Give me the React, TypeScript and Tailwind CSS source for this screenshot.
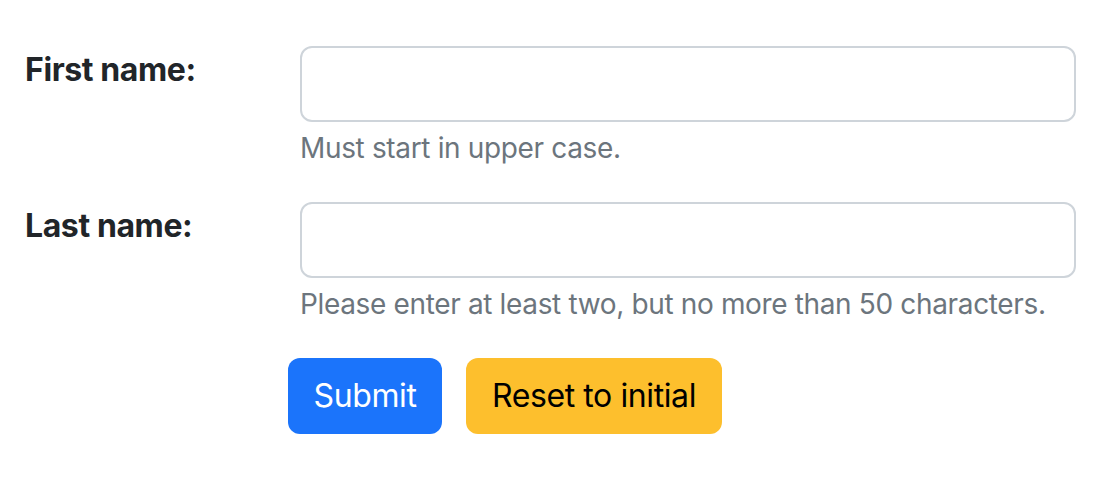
import React from 'react';

interface FieldRowProps {
    label: string;
    help: string;
    className?: string;
}

function FieldRow({ label, help, className }: FieldRowProps) {
    return (
        <div className={`flex ${className ?? ''}`}>
            <label className="w-[275px] shrink-0 text-[32px] font-bold leading-[48px] tracking-[-0.4px] text-[#212529]">
                {label}
            </label>
            <div className="flex-1">
                <input
                    type="text"
                    className="block w-full h-[76px] border-2 border-[#ced4da] rounded-[12px] bg-white px-6 text-[32px] outline-none"
                />
                <div className="mt-2 text-[28px] leading-[36px] tracking-[-0.35px] text-[#6c757d]">{help}</div>
            </div>
        </div>
    );
}

export default function App() {
    return (
        <div className="min-h-[500px] bg-white pl-[25px] pr-[44px] pt-[46px] font-['Inter','Liberation_Sans',sans-serif]">
            <FieldRow label="First name:" help="Must start in upper case." />
            <FieldRow
                label="Last name:"
                help="Please enter at least two, but no more than 50 characters."
                className="mt-9"
            />

            {/* Buttons */}
            <div className="mt-9 ml-[263px] flex gap-6">
                <button className="w-[154px] h-[76px] rounded-[12px] bg-[#1b74fb] text-white text-[32px] leading-[48px] tracking-[-0.4px]">
                    Submit
                </button>
                <button className="w-[256px] h-[76px] rounded-[12px] bg-[#fdbf2d] text-black text-[32px] leading-[48px] tracking-[-0.4px]">
                    Reset to initial
                </button>
            </div>
        </div>
    );
}
